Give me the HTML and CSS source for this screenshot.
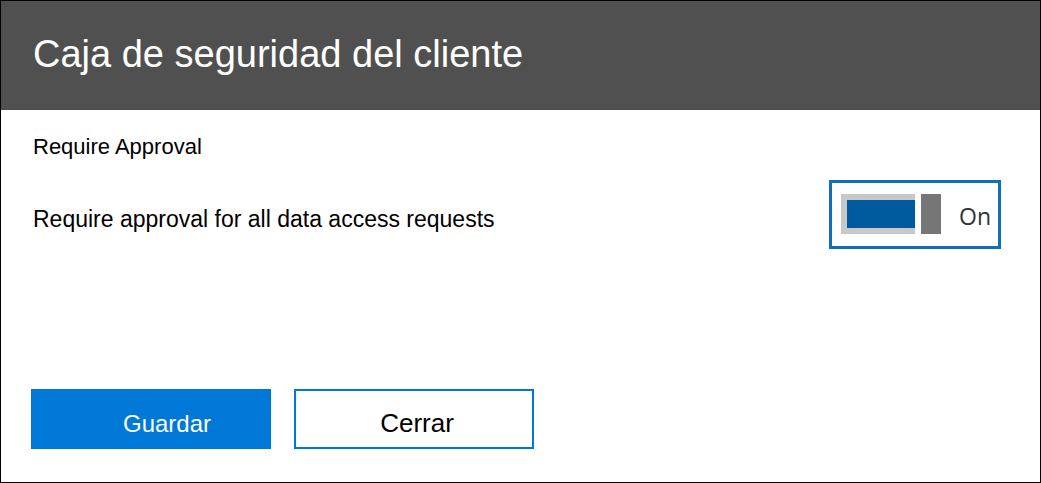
FILE: index.html
```html
<!DOCTYPE html>
<html lang="es">
<head>
<meta charset="utf-8">
<title>Caja de seguridad del cliente</title>
<link rel="stylesheet" href="styles.css">
</head>
<body>
<form class="panel">
  <header class="panel-header"><h1 class="title">Caja de seguridad del cliente</h1></header>
  <main class="panel-body">
    <h2 class="section">Require Approval</h2>
    <div class="setting">
      <label class="setting-label" for="approval">Require approval for all data access requests</label>
      <div class="toggle">
        <input class="switch" type="checkbox" role="switch" id="approval" checked>
        <span class="state">On</span>
      </div>
    </div>
  </main>
  <footer class="actions">
    <button class="button primary" type="submit">Guardar</button>
    <button class="button" type="button">Cerrar</button>
  </footer>
</form>
</body>
</html>
```

FILE: styles.css
```css
* {
  box-sizing: border-box;
}

body {
  margin: 0;
  font-family: "Liberation Sans", Arial, sans-serif;
  color: #000;
  background: #fff;
}

.panel {
  display: flex;
  flex-direction: column;
  min-height: 100vh;
  border: 1px solid #000;
}

.panel-header {
  padding: 29px 32px 32px;
  background: #505050;
  color: #fff;
}

.title {
  margin: 0;
  font-size: 38px;
  line-height: 48px;
  font-weight: 400;
}

.panel-body {
  flex: 1;
  padding: 23px 39px 0 32px;
}

.section {
  margin: 0;
  font-size: 22px;
  line-height: 28px;
  font-weight: 400;
}

.setting {
  display: flex;
  align-items: center;
  justify-content: space-between;
  margin-top: 19px;
}

.setting-label {
  font-size: 23px;
  line-height: 32px;
  padding-top: 8px;
}

.toggle {
  display: flex;
  align-items: center;
  gap: 18px;
  padding: 11px 7px 12px 9px;
  border: 3px solid #106ebe;
}

.switch {
  appearance: none;
  width: 100px;
  height: 40px;
  margin: 0;
  background:
    linear-gradient(#005a9e, #005a9e) 6px 6px / 68px 28px no-repeat,
    linear-gradient(#fff, #fff) 74px 0 / 6px 100% no-repeat,
    linear-gradient(90deg, #c8c8c8 80px, #767676 80px);
}

.state {
  padding-top: 4px;
  font-family: "Open Sans", sans-serif;
  font-size: 23px;
  line-height: 32px;
  color: #333;
}

.actions {
  display: flex;
  gap: 23px;
  padding: 0 30px 33px;
}

.button {
  width: 240px;
  height: 60px;
  padding: 8px 0 0 6px;
  border: 2px solid #0078d7;
  background: #fff;
  color: #000;
  font-family: inherit;
  font-size: 26px;
}

.primary {
  padding: 10px 0 0 32px;
  background: #0078d7;
  color: #fff;
  font-size: 24px;
}
```
